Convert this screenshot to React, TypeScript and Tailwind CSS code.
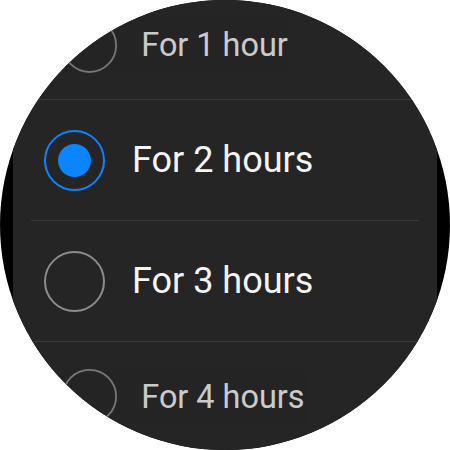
import React from 'react';

const options = [
  { label: 'For 1 hour', selected: false, edge: 'top' },
  { label: 'For 2 hours', selected: true, edge: '' },
  { label: 'For 3 hours', selected: false, edge: '' },
  { label: 'For 4 hours', selected: false, edge: 'bottom' },
];

const Radio: React.FC<{ selected: boolean }> = ({ selected }) =>
  selected ? (
    <div className="w-[61px] h-[61px] rounded-full border-2 border-[#0a84ff] flex items-center justify-center shrink-0">
      <div className="w-[33px] h-[33px] rounded-full bg-[#0a84ff]" />
    </div>
  ) : (
    <div className="w-[61px] h-[61px] rounded-full border-2 border-[#8c8c8c] shrink-0" />
  );

const App: React.FC = () => {
  return (
    <div className="w-[450px] h-[450px] bg-white" style={{ fontFamily: 'Roboto, "Open Sans", sans-serif' }}>
      <div className="w-[450px] h-[450px] rounded-full bg-black overflow-hidden">
        <div className="mx-[13px] h-full bg-[#252525] overflow-hidden">
          <div className="mt-[-21px]">
            {options.map((opt, i) => (
              <div
                key={opt.label}
                className={`h-[121px] mx-[18px] ${i < options.length - 1 ? 'border-b border-[#3a3a3a]' : ''}`}
              >
                <div
                  className={`h-full mx-[-18px] pl-[31px] flex items-center gap-[27px] ${
                    opt.edge === 'top'
                      ? 'scale-90 origin-bottom opacity-80'
                      : opt.edge === 'bottom'
                      ? 'scale-90 origin-top opacity-80'
                      : ''
                  }`}
                >
                  <Radio selected={opt.selected} />
                  <span className="text-[36px] text-[#f5f5f5] leading-none">{opt.label}</span>
                </div>
              </div>
            ))}
          </div>
        </div>
      </div>
    </div>
  );
};

export default App;
